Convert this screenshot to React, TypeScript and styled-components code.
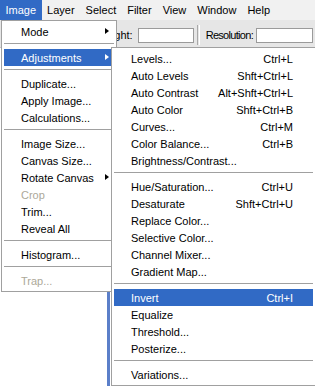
import styled, { createGlobalStyle } from "styled-components";

const GlobalStyle = createGlobalStyle`
  html, body {
    margin: 0;
    padding: 0;
    background: #ffffff;
    overflow: hidden;
  }
  body {
    font-family: "Liberation Sans", Arial, sans-serif;
    font-size: 11px;
    color: #000;
  }
`;

const Screen = styled.div`
  width: 315px;
  height: 386px;
  overflow: hidden;
  display: flex;
  flex-direction: column;
  background: #ffffff;
`;

const MenuBar = styled.div`
  height: 20px;
  display: flex;
  background: #f1f1f1;
  position: relative;
  z-index: 3;
`;

const BarItem = styled.div<{ active?: boolean }>`
  position: relative;
  height: 20px;
  line-height: 20px;
  padding: 0 5.5px;
  background: ${(p) => (p.active ? "#316ac5" : "transparent")};
  color: ${(p) => (p.active ? "#fff" : "#000")};
`;

const Toolbar = styled.div`
  height: 27px;
  display: flex;
  align-items: center;
  justify-content: flex-end;
  padding-right: 2px;
  background: #e6e6e6;
  border-bottom: 1px solid #c8c8c8;
`;

const ToolLabel = styled.span<{ tight?: boolean }>`
  white-space: nowrap;
  margin-right: ${(p) => (p.tight ? 3 : 5)}px;
  letter-spacing: ${(p) => (p.tight ? "-0.7px" : "0")};
  margin-top: 3px;
`;

const ToolInput = styled.div<{ w: number }>`
  width: ${(p) => p.w}px;
  height: 15px;
  box-sizing: border-box;
  background: #fff;
  border: 1px solid #9a9a9a;
  margin-top: 3px;
`;

const ToolDivider = styled.div`
  width: 1px;
  height: 20px;
  border-left: 1px solid #a8a8a8;
  border-right: 1px solid #fff;
  margin: 3px 6px 0 3px;
`;

const Workspace = styled.div`
  flex: 1;
  display: flex;
  background: #ffffff;
`;

const DocWindow = styled.div`
  width: 107px;
  border-right: 3px solid #5b7fc9;
  background: #ffffff;
`;

const Menu = styled.div<{ w: number }>`
  position: absolute;
  width: ${(p) => p.w}px;
  box-sizing: border-box;
  background: #ffffff;
  border: 1px solid #a0a0a0;
  padding: 2px;
  color: #000;
  line-height: normal;
`;

const MainMenu = styled(Menu)`
  top: 20px;
  left: 1px;
`;

const SubMenu = styled(Menu)`
  top: -2px;
  left: 107px;
  z-index: 2;
`;

const Item = styled.div<{ active?: boolean; disabled?: boolean }>`
  position: relative;
  height: 17px;
  display: flex;
  align-items: center;
  padding: 0 20px 0 17px;
  white-space: nowrap;
  background: ${(p) => (p.active ? "#316ac5" : "transparent")};
  color: ${(p) => (p.active ? "#fff" : p.disabled ? "#aca899" : "#000")};
`;

const Label = styled.span`
  flex: 1;
`;

const Shortcut = styled.span`
  text-align: right;
`;

const Arrow = styled.span`
  position: absolute;
  right: 5px;
  top: 5px;
  width: 0;
  height: 0;
  border-top: 3.5px solid transparent;
  border-bottom: 3.5px solid transparent;
  border-left: 4px solid currentColor;
`;

const Separator = styled.div`
  height: 9px;
  box-sizing: border-box;
  padding-top: 3px;
  &::after {
    content: "";
    display: block;
    height: 1px;
    background: #a0a0a0;
  }
`;

type Entry =
  | "sep"
  | { label: string; key?: string; sub?: boolean; active?: boolean; disabled?: boolean };

const adjustments: Entry[] = [
  { label: "Levels...", key: "Ctrl+L" },
  { label: "Auto Levels", key: "Shft+Ctrl+L" },
  { label: "Auto Contrast", key: "Alt+Shft+Ctrl+L" },
  { label: "Auto Color", key: "Shft+Ctrl+B" },
  { label: "Curves...", key: "Ctrl+M" },
  { label: "Color Balance...", key: "Ctrl+B" },
  { label: "Brightness/Contrast..." },
  "sep",
  { label: "Hue/Saturation...", key: "Ctrl+U" },
  { label: "Desaturate", key: "Shft+Ctrl+U" },
  { label: "Replace Color..." },
  { label: "Selective Color..." },
  { label: "Channel Mixer..." },
  { label: "Gradient Map..." },
  "sep",
  { label: "Invert", key: "Ctrl+I", active: true },
  { label: "Equalize" },
  { label: "Threshold..." },
  { label: "Posterize..." },
  "sep",
  { label: "Variations..." },
];

const imageMenu: Entry[] = [
  { label: "Mode", sub: true },
  "sep",
  { label: "Adjustments", sub: true, active: true },
  "sep",
  { label: "Duplicate..." },
  { label: "Apply Image..." },
  { label: "Calculations..." },
  "sep",
  { label: "Image Size..." },
  { label: "Canvas Size..." },
  { label: "Rotate Canvas", sub: true },
  { label: "Crop", disabled: true },
  { label: "Trim..." },
  { label: "Reveal All" },
  "sep",
  { label: "Histogram..." },
  "sep",
  { label: "Trap...", disabled: true },
];

function renderEntries(entries: Entry[], withSub?: boolean) {
  return entries.map((e, i) => {
    if (e === "sep") return <Separator key={i} />;
    return (
      <Item key={i} active={e.active} disabled={e.disabled}>
        <Label>{e.label}</Label>
        {e.key && <Shortcut>{e.key}</Shortcut>}
        {e.sub && <Arrow />}
        {withSub && e.active && (
          <SubMenu w={205}>{renderEntries(adjustments)}</SubMenu>
        )}
      </Item>
    );
  });
}

const barItems = ["Image", "Layer", "Select", "Filter", "View", "Window", "Help"];

function App() {
  return (
    <>
      <GlobalStyle />
      <Screen>
        <MenuBar>
          {barItems.map((name, i) => (
            <BarItem key={name} active={i === 0}>
              {name}
              {i === 0 && <MainMenu w={116}>{renderEntries(imageMenu, true)}</MainMenu>}
            </BarItem>
          ))}
        </MenuBar>
        <Toolbar>
          <ToolLabel>Height:</ToolLabel>
          <ToolInput w={56} />
          <ToolDivider />
          <ToolLabel tight>Resolution:</ToolLabel>
          <ToolInput w={57} />
        </Toolbar>
        <Workspace>
          <DocWindow />
        </Workspace>
      </Screen>
    </>
  );
}

export default App;
